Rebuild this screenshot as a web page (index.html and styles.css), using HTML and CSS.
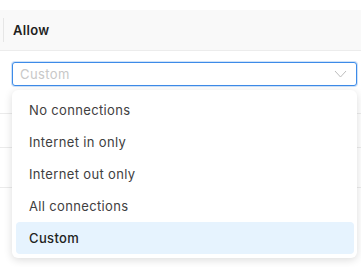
FILE: index.html
```html
<!DOCTYPE html>
<html lang="en">
<head>
  <meta charset="UTF-8">
  <meta name="viewport" content="width=device-width, initial-scale=1.0">
  <title>Allow</title>
  <link rel="stylesheet" href="styles.css">
</head>
<body>
  <div class="page">
    <div class="head">
      <div class="divider"></div>
      <div class="head-title">Allow</div>
    </div>
    <div class="body">
      <div class="select">
        <div class="select-input">
          <span class="placeholder">Custom</span>
          <svg class="chevron" width="13" height="8" viewBox="0 0 13 8">
            <path d="M1 1 L6.5 7 L12 1" fill="none" stroke="#bdbdbd" stroke-width="1"/>
          </svg>
        </div>
        <div class="menu">
          <div class="item">No connections</div>
          <div class="item">Internet in only</div>
          <div class="item">Internet out only</div>
          <div class="item">All connections</div>
          <div class="item selected">Custom</div>
        </div>
      </div>
      <div class="rows">
        <div class="row r1"></div>
        <div class="row r2"></div>
        <div class="row r3"></div>
      </div>
    </div>
  </div>
</body>
</html>
```

FILE: styles.css
```css
body {
  margin: 0;
  background-color: #ffffff;
  font-family: Inter, "Noto Sans", sans-serif;
  color: #333;
}
.page {
  width: 361px;
  height: 267px;
  padding-top: 10px;
  box-sizing: border-box;
  overflow: hidden;
}
.head {
  height: 40px;
  background-color: #f9f9f9;
  border-bottom: 1px solid #ececec;
  display: flex;
  align-items: center;
}
.divider {
  width: 1px;
  height: 24px;
  margin-left: 3px;
  background-color: #e6e6e6;
}
.head-title {
  margin-left: 9px;
  font-size: 13px;
  font-weight: 600;
  letter-spacing: 0.3px;
  color: #1f1f1f;
}
.body {
  position: relative;
  padding: 11px 4px 0 12px;
}
.select {
  position: relative;
  z-index: 2;
}
.select-input {
  height: 24px;
  box-sizing: border-box;
  border: 1px solid #3d8be8;
  border-radius: 3px;
  box-shadow: 0 0 0 1px rgba(61, 139, 232, 0.25);
  background-color: #fff;
  display: flex;
  align-items: center;
  justify-content: space-between;
  padding: 0 9px 0 7px;
}
.placeholder {
  font-size: 13px;
  letter-spacing: 0.4px;
  color: #c8c8c8;
}
.chevron {
  display: block;
}
.menu {
  position: absolute;
  top: 28px;
  left: 0;
  right: 0;
  padding: 4px 3px 4px 4px;
  background-color: #fff;
  border-radius: 6px;
  box-shadow: 0 2px 8px rgba(0, 0, 0, 0.14);
}
.item {
  height: 32px;
  display: flex;
  align-items: center;
  padding-left: 13px;
  font-size: 13px;
  letter-spacing: 0.35px;
  color: #404040;
  border-radius: 4px;
}
.item.selected {
  background-color: #e6f3fe;
  color: #222;
  font-weight: 500;
}
.rows {
  position: absolute;
  top: 0;
  left: 0;
  right: 0;
}
.row {
  border-bottom: 1px solid #ebebeb;
}
.r1 {
  height: 62px;
}
.r2 {
  height: 33px;
}
.r3 {
  height: 39px;
}
```
